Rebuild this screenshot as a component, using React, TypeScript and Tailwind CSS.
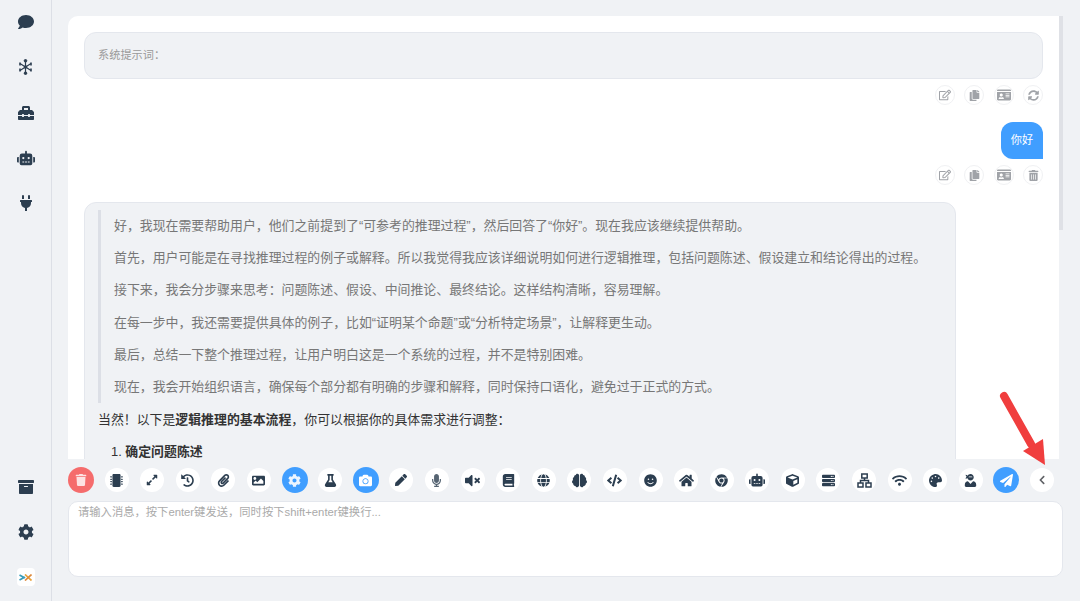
import type { ReactNode } from "react";
import {
  FaArchive,
  FaBook,
  FaBrain,
  FaCamera,
  FaChevronLeft,
  FaChrome,
  FaCode,
  FaCog,
  FaComment,
  FaCopy,
  FaCube,
  FaExpandAlt,
  FaFlask,
  FaGlobe,
  FaHistory,
  FaHome,
  FaIdCard,
  FaImage,
  FaMicrochip,
  FaMicrophone,
  FaPalette,
  FaPaperPlane,
  FaPaperclip,
  FaPen,
  FaPlug,
  FaRegEdit,
  FaRobot,
  FaServer,
  FaSmile,
  FaSyncAlt,
  FaToolbox,
  FaTrash,
  FaTrashAlt,
  FaUserNinja,
  FaVolumeMute,
  FaWifi,
} from "react-icons/fa";

const thoughts = [
  "好，我现在需要帮助用户，他们之前提到了“可参考的推理过程”，然后回答了“你好”。现在我应该继续提供帮助。",
  "首先，用户可能是在寻找推理过程的例子或解释。所以我觉得我应该详细说明如何进行逻辑推理，包括问题陈述、假设建立和结论得出的过程。",
  "接下来，我会分步骤来思考：问题陈述、假设、中间推论、最终结论。这样结构清晰，容易理解。",
  "在每一步中，我还需要提供具体的例子，比如“证明某个命题”或“分析特定场景”，让解释更生动。",
  "最后，总结一下整个推理过程，让用户明白这是一个系统的过程，并不是特别困难。",
  "现在，我会开始组织语言，确保每个部分都有明确的步骤和解释，同时保持口语化，避免过于正式的方式。",
];

function NodesIcon() {
  return (
    <svg width="15" height="16" viewBox="0 0 15 16" fill="#2c3e50" stroke="#2c3e50">
      <path d="M7.5 1.5V14.5M2 4.5L13 11.5M13 4.5L2 11.5" strokeWidth="1.2" />
      <path d="M2 3.5V6.5M13 3.5V6.5M2 9.5V12.5M13 9.5V12.5" strokeWidth="1.6" />
      <circle cx="7.5" cy="1.8" r="1.3" />
      <circle cx="7.5" cy="14.2" r="1.3" />
      <circle cx="7.5" cy="8" r="1.3" />
    </svg>
  );
}

function SitemapIcon() {
  return (
    <svg width="15" height="15" viewBox="0 0 15 15" fill="none" stroke="#2c3e50" strokeWidth="1.5">
      <rect x="4.8" y="1" width="5.4" height="4" />
      <rect x="1" y="10" width="5" height="4" />
      <rect x="9" y="10" width="5" height="4" />
      <path d="M7.5 5V7.5M3.5 10V7.5H11.5V10" />
    </svg>
  );
}

function Logo() {
  return (
    <div className="flex h-[18px] w-[18px] items-center justify-center rounded-[4px] bg-white">
      <svg width="13" height="7" viewBox="0 0 13 7" fill="none" strokeWidth="1.7">
        <path d="M0.5 1L5 3.5L0.5 6" stroke="#3a9dbb" />
        <path d="M3 3.5H6" stroke="#3a9dbb" />
        <path d="M6 0.5L12.5 6.5" stroke="#e8a13a" />
        <path d="M12.5 0.5L6 6.5" stroke="#dd8a3c" />
      </svg>
    </div>
  );
}

function Sidebar() {
  const top = [
    <FaComment key="a" size={16} />,
    <NodesIcon key="b" />,
    <FaToolbox key="c" size={16} />,
    <FaRobot key="d" size={20} />,
    <FaPlug key="e" size={16} />,
  ];
  return (
    <aside className="flex h-full w-[52px] shrink-0 flex-col items-center justify-between border-r border-[#dcdfe6] pb-[15px] pt-[13px] text-[#2c3e50]">
      <div className="flex flex-col items-center gap-[27.3px]">
        {top.map((icon, i) => (
          <div key={i} className="flex h-[18px] w-[18px] items-center justify-center">
            {icon}
          </div>
        ))}
      </div>
      <div className="flex flex-col items-center gap-[27px]">
        <div className="flex h-[18px] w-[18px] items-center justify-center">
          <FaArchive size={16} />
        </div>
        <div className="flex h-[18px] w-[18px] items-center justify-center">
          <FaCog size={16} />
        </div>
        <Logo />
      </div>
    </aside>
  );
}

function Action({ children }: { children: ReactNode }) {
  return (
    <div className="flex h-[20px] w-[20px] items-center justify-center rounded-full border border-[#f0f1f3] bg-white text-[#a0a3a8]">
      {children}
    </div>
  );
}

function Actions({ last }: { last: ReactNode }) {
  return (
    <div className="mt-[6px] flex justify-end gap-[9.5px]">
      <Action>
        <FaRegEdit size={12} />
      </Action>
      <Action>
        <FaCopy size={11} />
      </Action>
      <Action>
        <FaIdCard size={14} />
      </Action>
      <Action>{last}</Action>
    </div>
  );
}

function Messages() {
  return (
    <div className="flex h-[443px] w-[991px] shrink-0 flex-col overflow-hidden rounded-tl-[10px] bg-white pl-4 pr-4 pt-4">
      <div className="flex h-[47px] shrink-0 items-center rounded-[12px] border border-[#e4e7ed] bg-[#f0f2f5] pl-[13px] text-[11.2px] text-[#999]">
        系统提示词：
      </div>
      <div className="shrink-0">
        <Actions last={<FaSyncAlt size={11} />} />
      </div>
      <div className="mt-[17px] flex shrink-0 justify-end">
        <div className="flex h-[37px] w-[42px] items-center justify-center rounded-[12px] rounded-br-none bg-[#409eff] text-[11.2px] text-white">
          你好
        </div>
      </div>
      <div className="shrink-0">
        <Actions last={<FaTrashAlt size={11} />} />
      </div>
      <div className="mt-[17px] w-[872px] shrink-0 rounded-[12px] border border-[#e4e7ed] bg-[#f0f2f5] px-[13px] pt-[7px] text-[12.9px] leading-[32.2px] text-[#333]">
        <div className="border-l-[3px] border-[#dcdfe6] pl-[13px] text-[#777]">
          {thoughts.map((t) => (
            <p key={t} className="whitespace-nowrap">
              {t}
            </p>
          ))}
        </div>
        <p className="mt-[1px] whitespace-nowrap">
          当然！以下是<strong className="font-bold">逻辑推理的基本流程</strong>，你可以根据你的具体需求进行调整：
        </p>
        <p className="pl-[13px]">
          1. <strong className="font-bold">确定问题陈述</strong>
        </p>
        <div className="h-10" />
      </div>
    </div>
  );
}

const tools: { icon: ReactNode; blue?: boolean }[] = [
  { icon: <FaMicrochip size={13} /> },
  { icon: <FaExpandAlt size={12} /> },
  { icon: <FaHistory size={13} /> },
  { icon: <FaPaperclip size={13} /> },
  { icon: <FaImage size={13} /> },
  { icon: <FaCog size={13} className="opacity-90" />, blue: true },
  { icon: <FaFlask size={13} /> },
  { icon: <FaCamera size={13} />, blue: true },
  { icon: <FaPen size={12} /> },
  { icon: <FaMicrophone size={13} className="opacity-80" /> },
  { icon: <FaVolumeMute size={15} /> },
  { icon: <FaBook size={13} /> },
  { icon: <FaGlobe size={13} /> },
  { icon: <FaBrain size={15} /> },
  { icon: <FaCode size={15} /> },
  { icon: <FaSmile size={13} /> },
  { icon: <FaHome size={15} /> },
  { icon: <FaChrome size={13} /> },
  { icon: <FaRobot size={16} /> },
  { icon: <FaCube size={13} /> },
  { icon: <FaServer size={13} /> },
  { icon: <SitemapIcon /> },
  { icon: <FaWifi size={15} /> },
  { icon: <FaPalette size={13} /> },
  { icon: <FaUserNinja size={13} /> },
  { icon: <FaPaperPlane size={13} />, blue: true },
];

function Toolbar() {
  return (
    <div className="flex h-[42px] shrink-0 items-center gap-[9.6px]">
      <div className="flex h-[26px] w-[26px] shrink-0 items-center justify-center rounded-full bg-[#f56c6c] text-[#fde2e2]">
        <FaTrash size={12} />
      </div>
      {tools.map((t, i) => (
        <div key={i} className="flex h-[26px] w-[26px] shrink-0 items-center justify-center">
          <div
            className={
              t.blue
                ? "flex h-[26px] w-[26px] items-center justify-center rounded-full bg-[#409eff] text-white"
                : "flex h-[24px] w-[24px] items-center justify-center rounded-full bg-white text-[#2c3e50]"
            }
          >
            {t.icon}
          </div>
        </div>
      ))}
      <div className="flex h-[26px] w-[26px] shrink-0 items-center justify-center">
        <div className="flex h-[24px] w-[24px] items-center justify-center rounded-full bg-white text-[#606266]">
          <FaChevronLeft size={10} />
        </div>
      </div>
    </div>
  );
}

export default function App() {
  return (
    <div
      className="relative flex h-[601px] w-[1080px] overflow-hidden bg-[#f0f2f5]"
      style={{ fontFamily: '"Liberation Sans", "Noto Sans CJK SC", sans-serif' }}
    >
      <Sidebar />
      <main className="flex flex-1 flex-col pl-4 pt-4">
        <div className="flex h-[443px] shrink-0">
          <Messages />
          <div className="w-[4px] shrink-0">
            <div className="h-[214px] bg-[#dfe1e6]" />
          </div>
        </div>
        <Toolbar />
        <div className="h-[76px] w-[995px] shrink-0 rounded-[10px] border border-[#e4e7ed] bg-white px-[9px] py-[2px] text-[11.3px] text-[#aaa]">
          请输入消息，按下enter键发送，同时按下shift+enter键换行...
        </div>
      </main>
      <svg className="pointer-events-none absolute left-[995px] top-[388px]" width="60" height="85" viewBox="0 0 60 85">
        <path d="M9 8L36 56" stroke="#f03e3e" strokeWidth="8" strokeLinecap="round" />
        <path d="M50 77L28 63L48 51Z" fill="#f03e3e" />
      </svg>
    </div>
  );
}
